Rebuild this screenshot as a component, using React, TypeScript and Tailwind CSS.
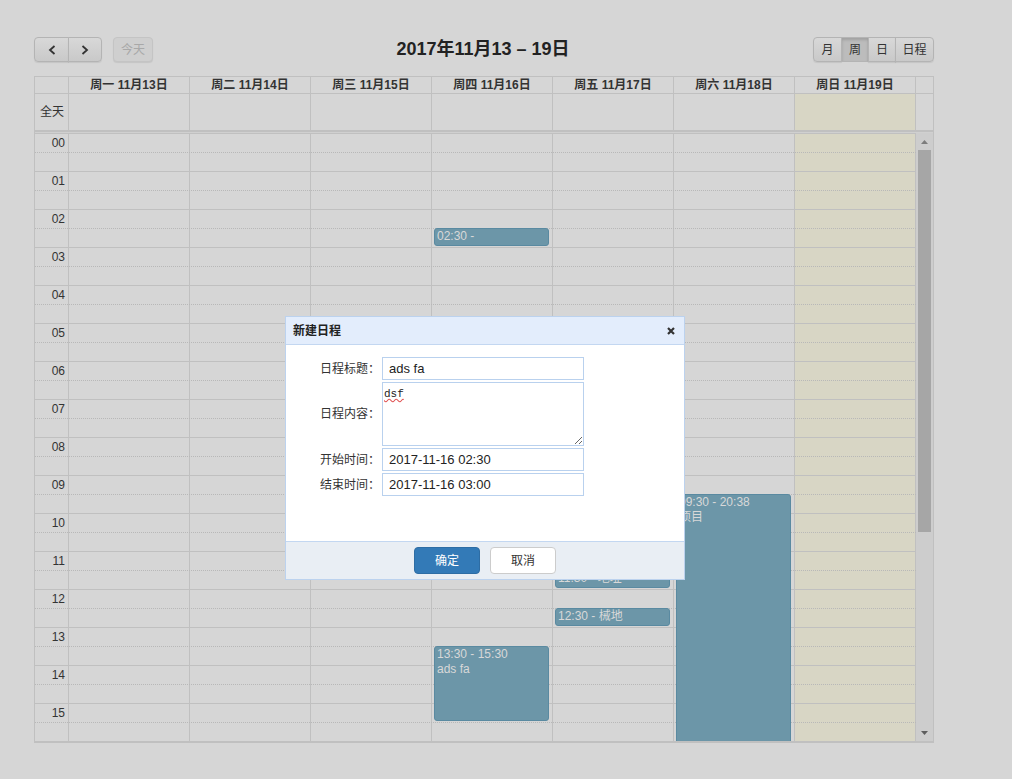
import React from "react";

const days = [
  "周一 11月13日",
  "周二 11月14日",
  "周三 11月15日",
  "周四 11月16日",
  "周五 11月17日",
  "周六 11月18日",
  "周日 11月19日",
];

const hours = Array.from({ length: 16 }, (_, i) => String(i).padStart(2, "0"));

type Ev = { day: number; start: number; end: number; time: string; title?: string };

const events: Ev[] = [
  { day: 3, start: 2.5, end: 3, time: "02:30 - " },
  { day: 3, start: 13.5, end: 15.5, time: "13:30 - 15:30", title: "ads fa" },
  { day: 4, start: 11.5, end: 12, time: "11:30 - 地址" },
  { day: 4, start: 12.5, end: 13, time: "12:30 - 械地" },
  { day: 5, start: 9.5, end: 20.63, time: "09:30 - 20:38", title: "项目" },
];

const HOUR = 38;

function Chevron({ dir }: { dir: "left" | "right" }) {
  return (
    <svg width="8" height="10" viewBox="0 0 8 10" fill="none">
      <path
        d={dir === "left" ? "M6.5 1 L2 5 L6.5 9" : "M1.5 1 L6 5 L1.5 9"}
        stroke="#333"
        strokeWidth="1.8"
      />
    </svg>
  );
}

function ToolButton({
  children,
  className = "",
  active = false,
  disabled = false,
}: {
  children: React.ReactNode;
  className?: string;
  active?: boolean;
  disabled?: boolean;
}) {
  return (
    <button
      className={`h-[25px] flex items-center justify-center border border-[#b4b4b4] text-[12px] ${
        active
          ? "bg-[#bcbcbc] shadow-[inset_0_2px_3px_rgba(0,0,0,0.15)]"
          : "bg-gradient-to-b from-[#d8d8d8] to-[#c9c9c9] shadow-[0_1px_1px_rgba(0,0,0,0.08)]"
      } ${disabled ? "text-[#a8a8a8] border-[#c4c4c4] bg-none bg-[#cfcfcf]" : "text-[#333]"} ${className}`}
    >
      {children}
    </button>
  );
}

function Calendar() {
  return (
    <div className="w-[900px] border border-b-2 border-[#c0c0c0]">
      {/* Head */}
      <div className="grid grid-cols-[34px_repeat(7,121px)_17px] h-[17px] border-b border-[#c0c0c0]">
        <div className="border-r border-[#c0c0c0]" />
        {days.map((d) => (
          <div
            key={d}
            className="border-r border-[#c0c0c0] text-center text-[12px] font-bold leading-[16px] text-[#333]"
          >
            {d}
          </div>
        ))}
        <div />
      </div>

      {/* All day */}
      <div className="grid grid-cols-[34px_repeat(7,121px)_17px] h-[36px]">
        <div className="border-r border-[#c0c0c0] flex items-center justify-end pr-[4px] text-[12px] text-[#333]">
          全天
        </div>
        {days.map((d, i) => (
          <div
            key={d}
            className={`border-r border-[#c0c0c0] ${i === 6 ? "bg-[#d8d6c5]" : ""}`}
          />
        ))}
        <div />
      </div>
      <div className="h-[3px] border-t-2 border-[#c0c0c0] bg-[#d0d0d0]" />

      {/* Time grid */}
      <div className="flex h-[608px]">
        <div className="relative w-[881px] overflow-hidden">
          {/* column backgrounds */}
          <div className="absolute inset-0 grid grid-cols-[34px_repeat(7,121px)]">
            <div className="border-r border-[#c0c0c0]" />
            {days.map((d, i) => (
              <div
                key={d}
                className={`border-r border-[#c0c0c0] ${i === 6 ? "bg-[#d8d6c5]" : ""}`}
              />
            ))}
          </div>

          {/* slats */}
          <div className="relative">
            {hours.map((h) => (
              <div key={h} className="h-[38px]">
                <div className="h-[19px] border-t border-[#c0c0c0] flex">
                  <div className="w-[34px] text-right pr-[4px] pt-[2px] text-[12px] leading-[14px] text-[#333]">
                    {h}
                  </div>
                </div>
                <div className="h-[19px] border-t border-dotted border-[#b8b8b8]" />
              </div>
            ))}
          </div>

          {/* events */}
          <div className="absolute inset-0 grid grid-cols-[34px_repeat(7,121px)]">
            <div />
            {days.map((d, i) => (
              <div key={d} className="relative">
                {events
                  .filter((e) => e.day === i)
                  .map((e) => (
                    <div
                      key={e.time}
                      className="absolute left-[2px] right-[4px] rounded-[3px] border border-[#5a8aa1] bg-[#6c96a8] pl-[2px] text-[12px] leading-[15px] text-[#d8d8d8] overflow-hidden"
                      style={{ top: e.start * HOUR, height: (e.end - e.start) * HOUR - 1 }}
                    >
                      <div>{e.time}</div>
                      {e.title && <div>{e.title}</div>}
                    </div>
                  ))}
              </div>
            ))}
          </div>
        </div>

        {/* scrollbar */}
        <div className="w-[17px] bg-[#cdcdcd] flex flex-col items-center">
          <div className="h-[17px] flex items-center justify-center">
            <svg width="7" height="4" viewBox="0 0 7 4">
              <path d="M0 4 L3.5 0 L7 4 Z" fill="#7c7c7c" />
            </svg>
          </div>
          <div className="w-[13px] h-[382px] bg-[#a6a6a6]" />
          <div className="flex-1" />
          <div className="h-[17px] flex items-center justify-center">
            <svg width="7" height="4" viewBox="0 0 7 4">
              <path d="M0 0 L7 0 L3.5 4 Z" fill="#5e5e5e" />
            </svg>
          </div>
        </div>
      </div>
    </div>
  );
}

function Modal() {
  const input =
    "w-[202px] h-[23px] border border-[#b9d1ee] bg-white pl-[6px] text-[13px] text-[#222] outline-none";
  const label = "w-[94px] text-right text-[12px] text-[#333]";
  return (
    <div className="absolute left-[285px] top-[316px] w-[400px] border border-[#bcd2ee] bg-white">
      <div className="h-[28px] bg-[#e3edfc] border-b border-[#c3d7f1] flex items-center justify-between pl-[7px] pr-[9px]">
        <span className="text-[12px] font-bold text-[#222]">新建日程</span>
        <svg width="8" height="8" viewBox="0 0 8 8">
          <path d="M1 1 L7 7 M7 1 L1 7" stroke="#333" strokeWidth="2.2" />
        </svg>
      </div>
      <div className="h-[196px] pt-[12px] flex flex-col gap-[2px]">
        <div className="flex items-center gap-[2px]">
          <span className={label}>日程标题：</span>
          <input className={input} defaultValue="ads fa" readOnly />
        </div>
        <div className="flex items-center gap-[2px]">
          <span className={label}>日程内容：</span>
          <textarea
            className="w-[202px] h-[64px] border border-[#b9d1ee] bg-white pt-[5px] pl-px text-[11px] leading-[13px] text-[#222] font-['Liberation_Mono',monospace] underline decoration-wavy decoration-[#e05050] outline-none"
            defaultValue="dsf"
            readOnly
          />
        </div>
        <div className="flex items-center gap-[2px]">
          <span className={label}>开始时间：</span>
          <input className={input} defaultValue="2017-11-16 02:30" readOnly />
        </div>
        <div className="flex items-center gap-[2px]">
          <span className={label}>结束时间：</span>
          <input className={input} defaultValue="2017-11-16 03:00" readOnly />
        </div>
      </div>
      <div className="h-[38px] border-t border-[#c3d7f1] bg-[#e9eef4] flex items-center justify-center gap-[10px]">
        <button className="w-[66px] h-[27px] rounded-[4px] bg-[#337ab7] border border-[#2e6da4] text-white text-[12px]">
          确定
        </button>
        <button className="w-[66px] h-[27px] rounded-[4px] bg-white border border-[#cccccc] text-[#333] text-[12px]">
          取消
        </button>
      </div>
    </div>
  );
}

export default function App() {
  return (
    <div className="relative min-h-screen w-full bg-[#d6d6d6] pt-[37px] pl-[34px] font-['Liberation_Sans','Noto_Sans_CJK_SC',sans-serif]">
      {/* Toolbar */}
      <div className="w-[900px] h-[25px] flex items-center justify-between mb-[14px]">
        <div className="flex items-center">
          <div className="flex">
            <ToolButton className="w-[35px] rounded-l-[4px]">
              <Chevron dir="left" />
            </ToolButton>
            <ToolButton className="w-[34px] rounded-r-[4px] -ml-px">
              <Chevron dir="right" />
            </ToolButton>
          </div>
          <ToolButton className="w-[40px] ml-[11px] rounded-[4px]" disabled>
            今天
          </ToolButton>
        </div>
        <h2 className="text-[18px] leading-[25px] font-bold text-[#222]">2017年11月13 – 19日</h2>
        <div className="flex">
          <ToolButton className="w-[29px] rounded-l-[4px]">月</ToolButton>
          <ToolButton className="w-[28px] -ml-px" active>
            周
          </ToolButton>
          <ToolButton className="w-[28px] -ml-px">日</ToolButton>
          <ToolButton className="w-[39px] -ml-px rounded-r-[4px]">日程</ToolButton>
        </div>
      </div>

      <Calendar />
      <Modal />
    </div>
  );
}
